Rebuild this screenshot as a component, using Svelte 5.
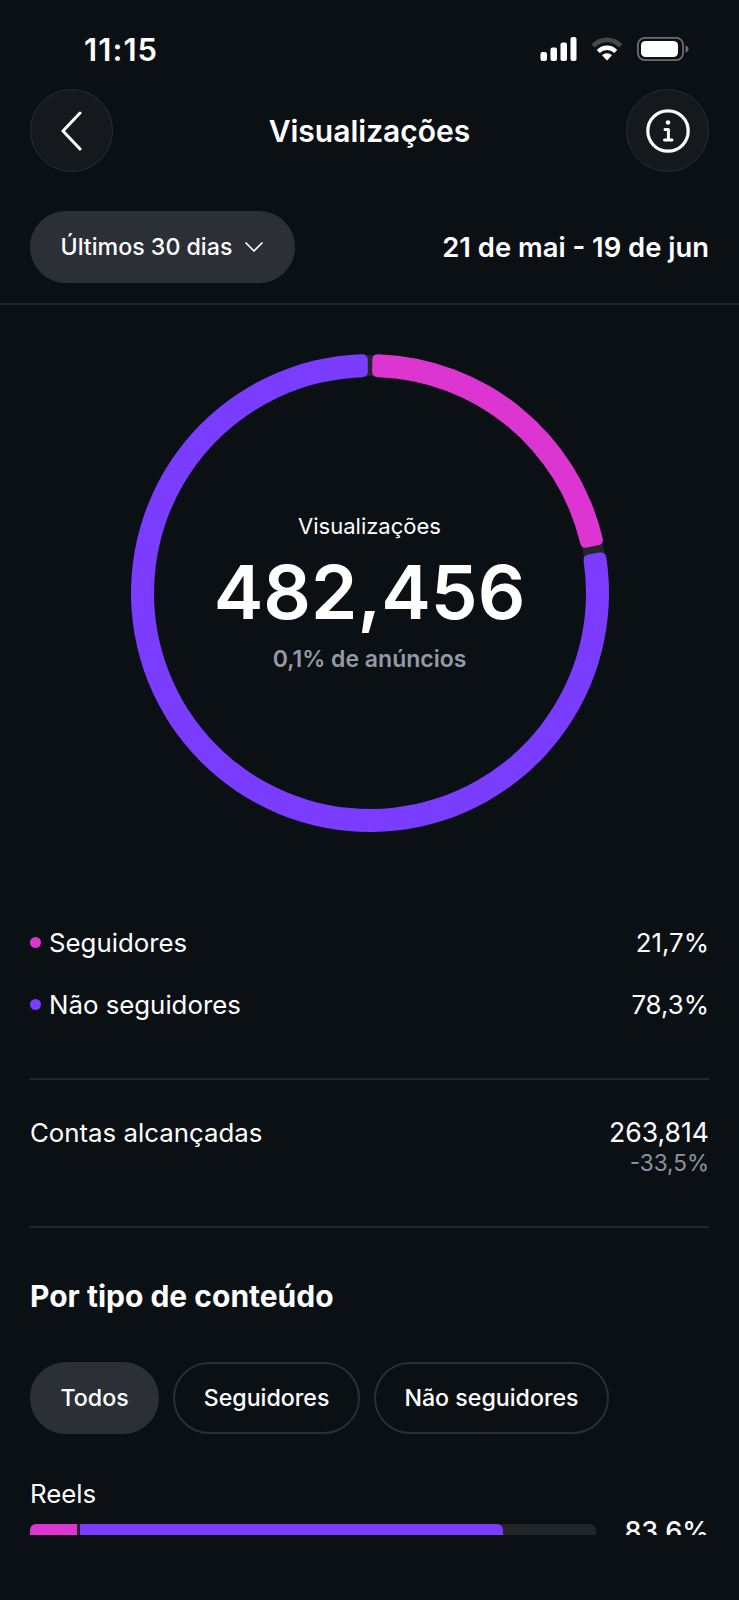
<script>
  const cx = 240, cy = 240, outer = 239, inner = 216;

  function pt(r, deg) {
    const a = (deg * Math.PI) / 180;
    return `${(cx + r * Math.sin(a)).toFixed(2)} ${(cy - r * Math.cos(a)).toFixed(2)}`;
  }

  // annular sector with slightly rounded corners
  function sector(from, to, c = 6) {
    const dO = (c / outer) * (180 / Math.PI), dI = (c / inner) * (180 / Math.PI);
    const large = to - from > 180 ? 1 : 0;
    return [
      `M${pt(outer, from + dO)}`,
      `A${outer} ${outer} 0 ${large} 1 ${pt(outer, to - dO)}`,
      `Q${pt(outer, to)} ${pt(outer - c, to)}`,
      `L${pt(inner + c, to)}`,
      `Q${pt(inner, to)} ${pt(inner, to - dI)}`,
      `A${inner} ${inner} 0 ${large} 0 ${pt(inner, from + dI)}`,
      `Q${pt(inner, from)} ${pt(inner + c, from)}`,
      `L${pt(outer - c, from)}`,
      `Q${pt(outer, from)} ${pt(outer, from + dO)}Z`
    ].join(' ');
  }

  const segments = [
    { color: '#dc35d2', from: 0.55, to: 78.2 },
    { color: '#7a3cff', from: 80, to: 359.45 }
  ];

  const legend = [
    { color: '#dc35d2', label: 'Seguidores', value: '21,7%' },
    { color: '#7a3cff', label: 'Não seguidores', value: '78,3%' }
  ];

  const filters = ['Todos', 'Seguidores', 'Não seguidores'];
</script>

<div class="screen">
  <div class="status">
    <span class="time">11:15</span>
    <div class="status-icons">
      <svg class="signal" width="37" height="24" viewBox="0 0 37 24">
        <rect x="0.5" y="15" width="6.5" height="9" rx="2" />
        <rect x="10.5" y="10.5" width="6.5" height="13.5" rx="2" />
        <rect x="20.5" y="5.5" width="6.5" height="18.5" rx="2" />
        <rect x="30.5" y="0" width="6" height="24" rx="2" />
      </svg>
      <svg width="32" height="24" viewBox="0 0 32 24">
        <path d="M0.5 7.2 A21.5 21.5 0 0 1 31.5 7.2 L28.3 10.6 A17 17 0 0 0 3.7 10.6Z" fill="#44474b" />
        <path d="M5.8 12.9 A14.2 14.2 0 0 1 26.2 12.9 L23.2 16 A10 10 0 0 0 8.8 16Z" fill="#fff" />
        <path d="M11 18.3 A7 7 0 0 1 21 18.3 L16 23.6Z" fill="#fff" />
      </svg>
      <svg width="52" height="24" viewBox="0 0 52 24">
        <rect x="0.9" y="0.9" width="45.2" height="22.2" rx="7" fill="none" stroke="#6b6d70" stroke-width="1.8" />
        <rect x="4" y="4" width="37" height="16" rx="4.5" fill="#fff" />
        <path d="M48.5 8.5 C50.5 9 51.5 10.3 51.5 12 C51.5 13.7 50.5 15 48.5 15.5Z" fill="#6b6d70" />
      </svg>
    </div>
  </div>

  <header class="nav">
    <button class="round" aria-label="Voltar">
      <svg width="26" height="40" viewBox="0 0 26 40" fill="none" stroke="#fff" stroke-width="3" stroke-linecap="round" stroke-linejoin="round">
        <path d="M21 2 L4 20 L21 38" />
      </svg>
    </button>
    <h1>Visualizações</h1>
    <button class="round" aria-label="Informações">
      <svg width="44" height="44" viewBox="0 0 44 44" fill="none" stroke="#fff" stroke-linecap="round" stroke-linejoin="round">
        <circle cx="22" cy="22" r="20.2" stroke-width="3.2" />
        <path d="M19 20.5 H22.4 V31 M18.5 31 H26" stroke-width="3" />
        <circle cx="22" cy="13.5" r="2.3" fill="#fff" stroke="none" />
      </svg>
    </button>
  </header>

  <div class="range">
    <button class="pill filled">
      Últimos 30 dias
      <svg width="20" height="12" viewBox="0 0 20 12" fill="none" stroke="#fff" stroke-width="1.7" stroke-linecap="round" stroke-linejoin="round">
        <path d="M2 2 L10 10 L18 2" />
      </svg>
    </button>
    <span class="dates">21 de mai - 19 de jun</span>
  </div>

  <main class="content">
    <section class="ring">
      <svg width="480" height="480" viewBox="0 0 480 480">
        <circle cx={cx} cy={cy} r="227.5" fill="none" stroke="#22262b" stroke-width="21" />
        {#each segments as s}
          <path d={sector(s.from, s.to)} fill={s.color} />
        {/each}
      </svg>
      <div class="ring-text">
        <span class="ring-label">Visualizações</span>
        <span class="ring-value">482,456</span>
        <span class="ring-sub">0,1% de anúncios</span>
      </div>
    </section>

    <section class="legend">
      {#each legend as item}
        <div class="legend-row">
          <span class="dot" style="background: {item.color}"></span>
          <span class="grow">{item.label}</span>
          <span>{item.value}</span>
        </div>
      {/each}
    </section>

    <hr />

    <section class="reach">
      <span>Contas alcançadas</span>
      <div class="reach-values">
        <span class="reach-num">263,814</span>
        <span class="delta">-33,5%</span>
      </div>
    </section>

    <hr />

    <h2>Por tipo de conteúdo</h2>

    <div class="filters">
      {#each filters as f, i}
        <button class="pill" class:filled={i === 0}>{f}</button>
      {/each}
    </div>

    <div class="type-row">
      <span class="type-label">Reels</span>
      <div class="bar-row">
        <div class="bar">
          <span class="seg magenta"></span>
          <span class="seg purple"></span>
        </div>
        <span class="bar-value">83,6%</span>
      </div>
    </div>
  </main>
</div>

<style>
  :global(body) {
    margin: 0;
    background: #0b1015;
  }

  .screen {
    width: 739px;
    height: 1600px;
    overflow: hidden;
    background: #0b1015;
    color: #fff;
    font-family: Inter, 'Liberation Sans', sans-serif;
  }

  .status {
    display: flex;
    justify-content: space-between;
    align-items: center;
    height: 24px;
    padding: 37px 50px 0 84px;
  }

  .time {
    font-size: 31px;
    font-weight: 600;
    letter-spacing: 1.1px;
  }

  .status-icons {
    display: flex;
    align-items: center;
    gap: 14px;
  }

  .signal {
    fill: #fff;
  }

  .nav {
    display: flex;
    justify-content: space-between;
    align-items: center;
    padding: 28px 30px 0 30px;
  }

  .nav h1 {
    margin: 0;
    font-size: 30px;
    font-weight: 600;
  }

  .round {
    display: flex;
    align-items: center;
    justify-content: center;
    width: 83px;
    height: 83px;
    padding: 0;
    border: 1.5px solid #2a2e33;
    border-radius: 50%;
    background: #15191d;
  }

  .range {
    display: flex;
    justify-content: space-between;
    align-items: center;
    padding: 39px 30px 20px 30px;
    border-bottom: 2px solid #24282c;
  }

  .dates {
    font-size: 27.4px;
    font-weight: 600;
  }

  .pill {
    display: flex;
    align-items: center;
    gap: 12px;
    height: 72px;
    padding: 0 28.5px;
    border: 2px solid #2b2e33;
    border-radius: 36px;
    background: none;
    color: #fff;
    font-family: inherit;
    font-size: 23.2px;
    font-weight: 500;
    white-space: nowrap;
    box-sizing: border-box;
  }

  .pill.filled {
    border-color: #2c3036;
    background: #2c3036;
  }

  .content {
    height: 1230px;
    overflow: hidden;
    padding: 0 30px;
  }

  .ring {
    position: relative;
    display: flex;
    justify-content: center;
    padding-top: 48px;
  }

  .ring-text {
    position: absolute;
    top: 48px;
    left: 0;
    right: 0;
    height: 480px;
    display: flex;
    flex-direction: column;
    align-items: center;
  }

  .ring-label {
    margin-top: 159px;
    font-size: 22px;
    line-height: 28px;
  }

  .ring-value {
    margin-top: 10px;
    font-size: 74.5px;
    line-height: 84px;
    font-weight: 560;
  }

  .ring-sub {
    margin-top: 11px;
    font-size: 23px;
    line-height: 28px;
    font-weight: 600;
    color: #9599a5;
  }

  .legend {
    display: flex;
    flex-direction: column;
    gap: 31px;
    margin-top: 94px;
  }

  .legend-row {
    display: flex;
    align-items: center;
    font-size: 25.8px;
    line-height: 31px;
  }

  .dot {
    width: 11px;
    height: 11px;
    margin-right: 8px;
    border-radius: 50%;
  }

  .grow {
    flex: 1;
  }

  hr {
    margin: 0;
    border: 0;
    border-top: 2px solid #24282c;
  }

  .legend + hr {
    margin-top: 58px;
  }

  .reach {
    display: flex;
    justify-content: space-between;
    padding: 37px 0 50px;
    font-size: 25.8px;
    line-height: 31px;
  }

  .reach-values {
    display: flex;
    flex-direction: column;
    align-items: flex-end;
  }

  .reach-num {
    font-size: 26.6px;
  }

  .delta {
    margin-top: 2px;
    font-size: 22.5px;
    line-height: 26px;
    color: #8f939e;
  }

  h2 {
    margin: 50px 0 0;
    font-size: 30px;
    line-height: 36px;
    font-weight: 700;
  }

  .filters {
    display: flex;
    gap: 14px;
    margin-top: 48px;
  }

  .type-row {
    margin-top: 44px;
  }

  .type-label {
    display: block;
    font-size: 25.8px;
    line-height: 32px;
  }

  .bar-row {
    display: flex;
    align-items: flex-start;
    justify-content: space-between;
    margin-top: 6px;
  }

  .bar {
    display: flex;
    gap: 3px;
    width: 566px;
    height: 24px;
    margin-top: 8px;
    border-radius: 6px;
    overflow: hidden;
    background: #22262b;
  }

  .seg {
    display: block;
  }

  .magenta {
    width: 47px;
    background: #dc35d2;
  }

  .purple {
    width: 423px;
    border-radius: 0 6px 6px 0;
    background: #7a3cff;
  }

  .bar-value {
    font-size: 27px;
    line-height: 32px;
    font-weight: 500;
  }
</style>
